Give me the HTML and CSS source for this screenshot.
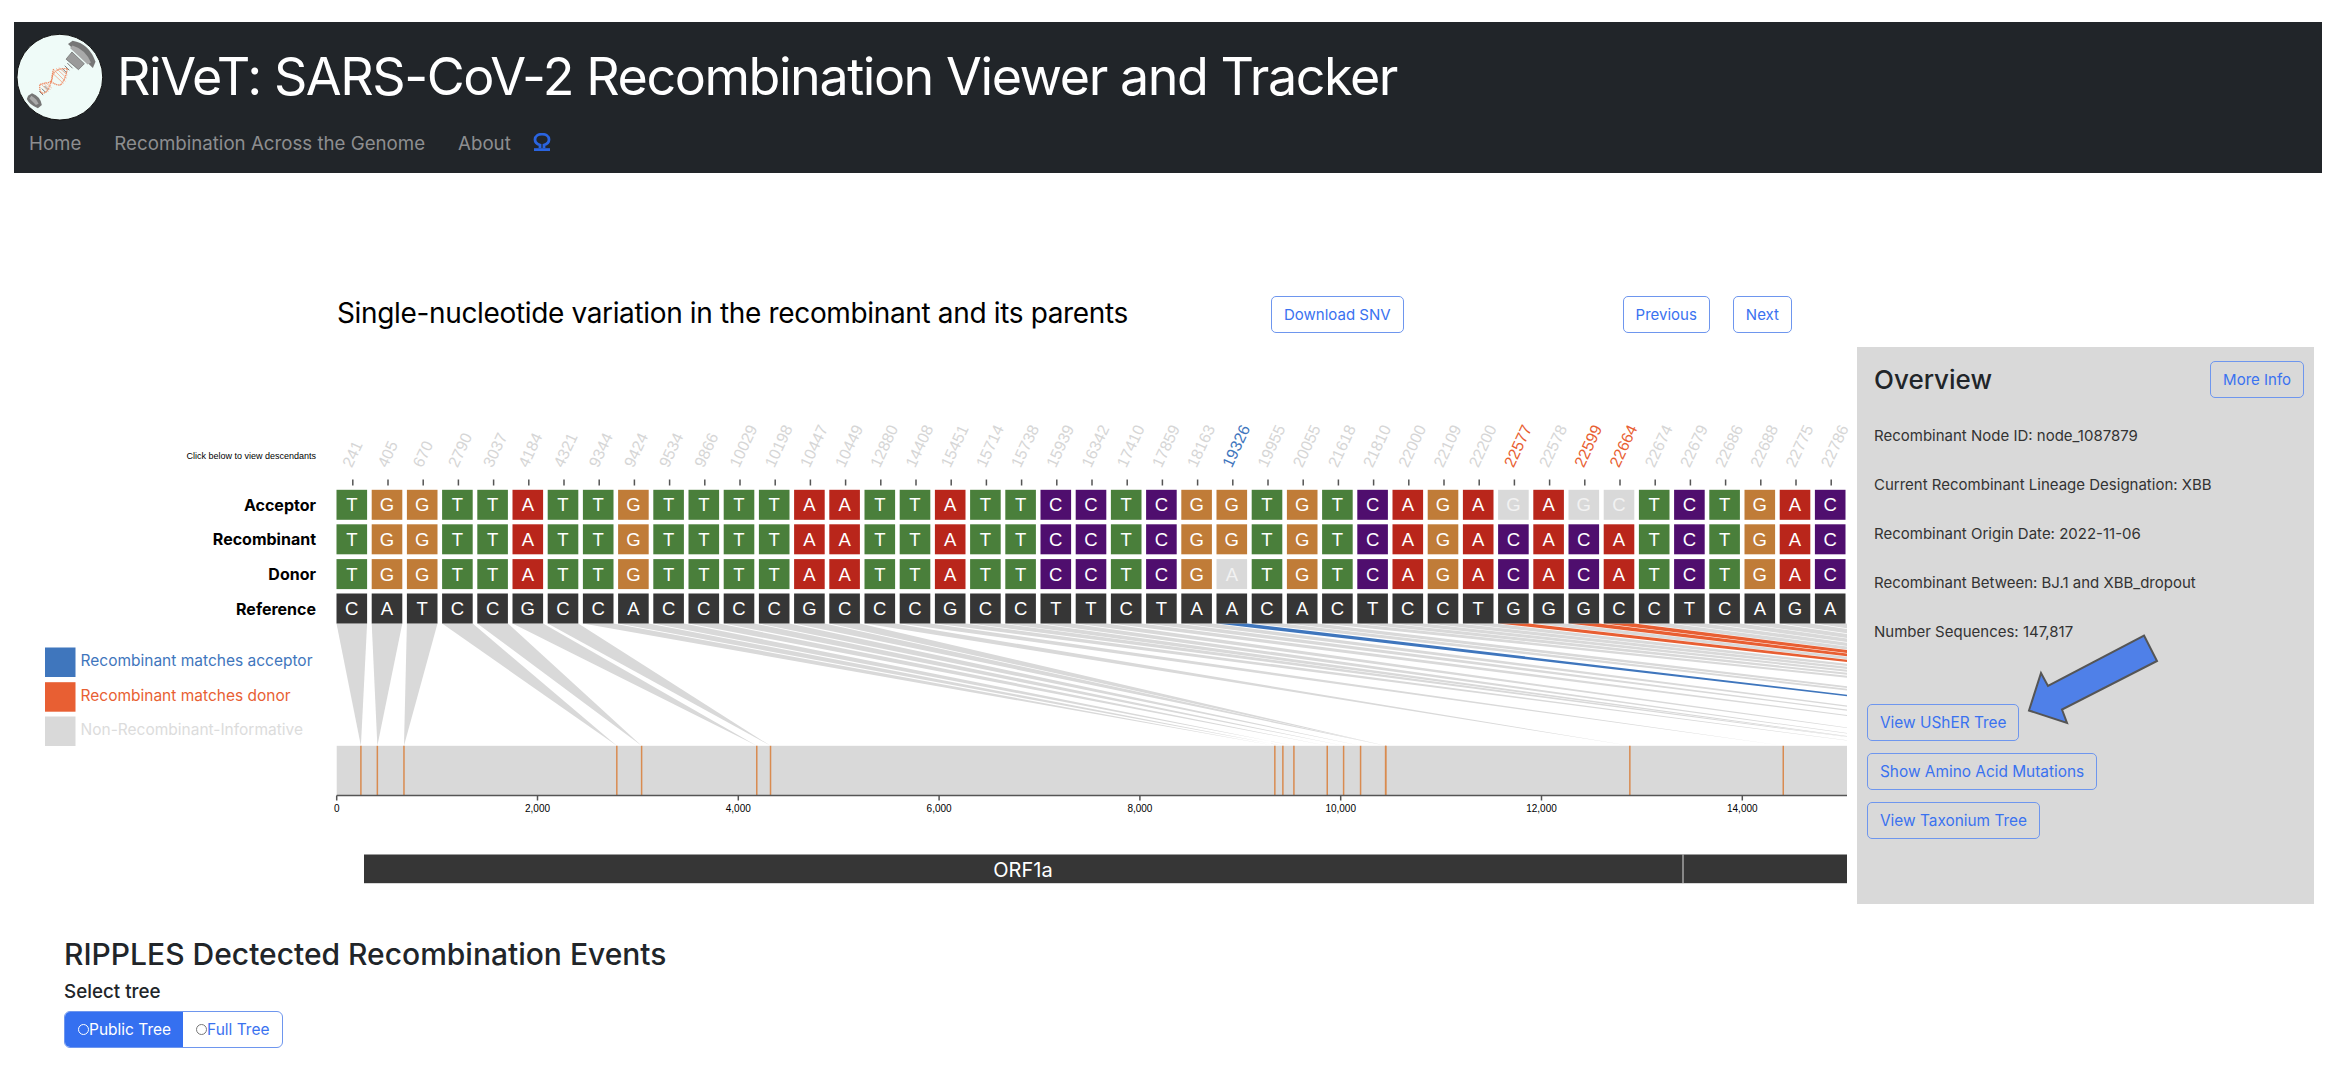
FILE: index.html
```html
<!DOCTYPE html>
<html lang="en">
<head>
<meta charset="utf-8">
<title>RiVeT: SARS-CoV-2 Recombination Viewer and Tracker</title>
<link rel="stylesheet" href="styles.css">
</head>
<body>
<header class="site-header">
  <div class="brand">
    <svg class="logo" viewBox="13 20 269 269" aria-label="RiVeT logo">
      <circle class="logo-disc" cx="147" cy="155" r="131"/>
      <path class="logo-cap" d="M172 54 L186 44 Q236 52 256 108 L248 127 Z"/>
      <path class="logo-cap-light" d="M186 58 Q225 70 242 110 L232 116 L178 66 Z"/>
      <path class="logo-stem" d="M184 78 L222 114 L204 132 L166 100 Z"/>
      <path class="logo-rungs" d="M170 112 L186 128 M162 120 L176 134 M154 128 L168 142 M100 182 L112 194 M92 190 L104 202 M84 198 L96 210"/>
      <path class="logo-helix" d="M170 130 C150 125 125 135 124 156 C122 178 100 170 86 178 M150 178 C165 160 166 145 170 130 M128 130 C122 150 124 160 120 170 C112 195 105 205 92 204 M120 168 C135 180 145 180 150 178 M86 178 C84 192 88 200 92 204"/>
      <path class="logo-rungs-o" d="M130 134 L164 168 M126 144 L158 174 M136 128 L168 158 M144 126 L170 148 M96 172 L118 194 M90 176 L112 200 M102 170 L122 188"/>
      <path class="logo-cap" d="M50 212 L62 204 Q88 214 92 240 L80 250 Q54 240 46 222 Z"/>
      <path class="logo-cap-light" d="M60 212 Q76 222 82 236 L74 240 L54 220 Z"/>
    </svg>
    <h1 class="site-title">RiVeT: SARS-CoV-2 Recombination Viewer and Tracker</h1>
  </div>
  <nav class="site-nav">
    <a class="nav-link">Home</a>
    <a class="nav-link">Recombination Across the Genome</a>
    <a class="nav-link">About</a>
    <svg class="gh-icon" viewBox="0 0 18 18" aria-label="GitHub">
      <path d="M7 15 V12 C3.2 11 2 8.8 2 6.5 C2 3 5.2 1.2 9 1.2 C12.8 1.2 16 3 16 6.5 C16 8.8 14.8 11 11 12 V15"/>
      <path d="M1 16.6 H17"/>
    </svg>
  </nav>
</header>

<main class="viz">
  <section class="viz-main">
    <div class="toolbar">
      <h2 class="viz-title">Single-nucleotide variation in the recombinant and its parents</h2>
      <button class="btn btn-download">Download SNV</button>
      <button class="btn btn-prev">Previous</button>
      <button class="btn btn-next">Next</button>
    </div>
    <svg id="chart" class="chart" viewBox="0 346.5 1857 557" width="1857" height="557"></svg>
  </section>

  <aside class="overview">
    <div class="overview-head">
      <h3 class="overview-title">Overview</h3>
      <button class="btn">More Info</button>
    </div>
    <div class="facts">
      <p class="fact">Recombinant Node ID: node_1087879</p>
      <p class="fact">Current Recombinant Lineage Designation: XBB</p>
      <p class="fact">Recombinant Origin Date: 2022-11-06</p>
      <p class="fact">Recombinant Between: BJ.1 and XBB_dropout</p>
      <p class="fact">Number Sequences: 147,817</p>
    </div>
    <div class="overview-actions">
      <button class="btn btn-action">View UShER Tree</button>
      <button class="btn btn-action">Show Amino Acid Mutations</button>
      <button class="btn btn-action">View Taxonium Tree</button>
    </div>
    <svg class="callout" viewBox="0 0 133 92" aria-hidden="true">
      <path d="M117 1.5 L130 27 L35 75.5 L40 89 L2 76.5 L14 39 L21 52 Z"/>
    </svg>
  </aside>
</main>

<section class="events">
  <h3 class="events-title">RIPPLES Dectected Recombination Events</h3>
  <div class="select-label">Select tree</div>
  <div class="tree-toggle">
    <label class="toggle-item is-active"><span class="radio"></span>Public Tree</label>
    <label class="toggle-item"><span class="radio"></span>Full Tree</label>
  </div>
</section>
<script src="chart.js"></script>
</body>
</html>
```
FILE: styles.css
```css
* { box-sizing: border-box; }
html, body { margin: 0; padding: 0; background: #fff; overflow: hidden; }
body { font-family: Inter, "Noto Sans", sans-serif; color: #212529; height: 1068px; }

.site-header {
  margin: 22px 14px 0 14px;
  height: 151px;
  background: #212529;
  padding: 11px 0 0 2px;
  display: flex;
  flex-direction: column;
}
.brand { display: flex; align-items: center; gap: 13px; height: 88px; }
.logo { width: 88px; height: 88px; flex: none; }
.logo-disc { fill: #effbf8; stroke: #111; stroke-width: 3; }
.logo-cap { fill: #767676; }
.logo-cap-light { fill: #a9a9a9; }
.logo-stem { fill: #9a9a9a; stroke: #666; stroke-width: 2; }
.logo-rungs { fill: none; stroke: #777; stroke-width: 3; }
.logo-helix { fill: none; stroke: #ee8a63; stroke-width: 4; stroke-dasharray: 4 2; }
.logo-rungs-o { fill: none; stroke: #f3a98c; stroke-width: 2.5; }
.site-title { margin: 0; font-size: 52px; letter-spacing: -1.44px; font-weight: 400; color: #fff; line-height: 1.2; white-space: nowrap; }
.site-nav { display: flex; align-items: center; gap: 33px; margin-top: 11px; padding-left: 13px; }
.nav-link { font-size: 18.7px; color: #8d8e90; line-height: 24px; }
.gh-icon { width: 18px; height: 18px; margin-left: -11px; margin-top: -4px; fill: none; stroke: #2a64e0; stroke-width: 2.8; }

.viz { display: flex; margin-top: 123px; }
.viz-main { width: 1857px; flex: none; }
.toolbar { display: flex; align-items: center; height: 37px; margin-bottom: 13.5px; padding-left: 337px; }
.viz-title { margin: 0 0 3px; width: 934px; flex: none; font-size: 28px; letter-spacing: -0.35px; font-weight: 400; color: #000; white-space: nowrap; }
.btn {
  font-family: inherit;
  font-size: 15px;
  color: #3a72f0;
  background: transparent;
  border: 1.5px solid #6e96ee;
  border-radius: 5px;
  height: 37px;
  padding: 0 12px;
  white-space: nowrap;
}
.btn-action { font-size: 15.4px; }
.btn-prev { margin-left: 219px; }
.btn-next { margin-left: 23px; }
.chart { display: block; }

.overview { position: relative; width: 457px; height: 557px; margin-top: 50.5px; background: #d9d9d9; }
.overview-head { display: flex; justify-content: space-between; align-items: center; padding: 14.5px 10px 0 17px; }
.overview-title { margin: 0; font-size: 26px; font-weight: 500; color: #212529; }
.facts { padding: 12.5px 0 0 17px; }
.fact { margin: 0; height: 49px; line-height: 49px; font-size: 15px; color: #333; white-space: nowrap; }
.overview-actions { display: flex; flex-direction: column; align-items: flex-start; gap: 12px; margin-top: 48.5px; padding-left: 10px; }
.callout { position: absolute; left: 170px; top: 287px; width: 133px; height: 92px; }
.callout path { fill: #4f80e8; stroke: #555; stroke-width: 2; }

.events { padding: 33px 0 0 64px; }
.events-title { margin: 0; font-size: 30px; font-weight: 500; line-height: 34px; color: #212529; }
.select-label { margin-top: 9px; font-size: 18.8px; font-weight: 500; line-height: 24px; }
.tree-toggle { display: inline-flex; margin-top: 7px; height: 37px; border: 1px solid #6e96ee; border-radius: 6px; overflow: hidden; }
.toggle-item { display: flex; align-items: center; padding: 0 12px 0 13px; font-size: 15.5px; color: #3a72f0; }
.toggle-item.is-active { background: #3570f0; color: #fff; }
.radio { width: 11px; height: 11px; border: 1px solid #777; border-radius: 50%; background: #fff; }
.is-active .radio { background: transparent; border-color: #fff; }

/* chart */
.nt { stroke: none; }
.nt-T { fill: #4a7f3b; }
.nt-G { fill: #c07c38; }
.nt-A { fill: #b9261b; }
.nt-C { fill: #4f0e6e; }
.nt-ref { fill: #363636; }
.nt-off { fill: #d9d9d9; }
.nt-label { font: 18.5px "Liberation Sans", sans-serif; fill: #fff; text-anchor: middle; }
.nt-label-off { fill: #f2f2f2; }
.pos-label { font: 16px "Liberation Sans", sans-serif; fill: #d6d6d6; }
.pos-label-acc { fill: #3f76bd; }
.pos-label-don { fill: #e85f33; }
.pos-tick { stroke: #555; stroke-width: 1.5; }
.row-label { font: 700 16px Inter, sans-serif; fill: #000; text-anchor: end; }
.hint { font: 9px "Liberation Sans", sans-serif; fill: #000; text-anchor: end; }
.link { fill: #d9d9d9; }
.link-acc { fill: #3f76bd; }
.link-don { fill: #e85f33; }
.genome-bar { fill: #d9d9d9; }
.genome-mark { stroke: #d98b50; stroke-width: 1.5; }
.axis-line { stroke: #555; stroke-width: 1.5; }
.axis-label { font: 10px "Liberation Sans", sans-serif; fill: #000; text-anchor: middle; }
.gene { fill: #363636; }
.gene-div { stroke: #d9d9d9; stroke-width: 1; }
.gene-label { font: 20px Inter, sans-serif; fill: #fff; text-anchor: middle; }
.legend-swatch-acc { fill: #3f76bd; }
.legend-swatch-don { fill: #e85f33; }
.legend-swatch-off { fill: #d9d9d9; }
.legend-text { font: 15.5px Inter, sans-serif; }
.legend-text-acc { fill: #3f76bd; }
.legend-text-don { fill: #e85f33; }
.legend-text-off { fill: #dcdcdc; }
```
FILE: chart.js
```js
(function () {
  var NS = 'http://www.w3.org/2000/svg';
  var svg = document.getElementById('chart');
  function el(tag, cls, attrs, text, parent) {
    var n = document.createElementNS(NS, tag);
    if (cls) n.setAttribute('class', cls);
    for (var k in attrs) n.setAttribute(k, attrs[k]);
    if (text != null) n.textContent = text;
    (parent || svg).appendChild(n);
    return n;
  }
  var positions = [241,405,670,2790,3037,4184,4321,9344,9424,9534,9866,10029,10198,10447,10449,12880,14408,15451,15714,15738,15939,16342,17410,17859,18163,19326,19955,20055,21618,21810,22000,22109,22200,22577,22578,22599,22664,22674,22679,22686,22688,22775,22786];
  var acceptor    = 'TGGTTATTGTTTTAATTATTCCTCGGTGTCAGAGAGCTCTGAC';
  var recombinant = 'TGGTTATTGTTTTAATTATTCCTCGGTGTCAGACACATCTGAC';
  var donor       = 'TGGTTATTGTTTTAATTATTCCTCGATGTCAGACACATCTGAC';
  var reference   = 'CATCCGCCACCCCGCCCGCCTTCTAACACTCCTGGGCCTCAGA';
  var offCells = { 0: [33, 35, 36], 2: [25] };
  var acc = [25], don = [33, 35, 36];
  var X0 = 336.5, PITCH = 35.2, W = 30.6, H = 30;
  var rows = [
    { name: 'Acceptor', seq: acceptor, y: 489.3 },
    { name: 'Recombinant', seq: recombinant, y: 523.8 },
    { name: 'Donor', seq: donor, y: 558.6 },
    { name: 'Reference', seq: reference, y: 593, ref: true }
  ];
  var SCALE = 0.1004, G0 = 336.7, RIGHT = 1847, TOP = 623, BAR = 745.3, BAR_B = 795;
  function gx(v) { return G0 + v * SCALE; }

  var defs = el('defs', '', {});
  var clip = el('clipPath', '', { id: 'plot-clip' }, null, defs);
  el('rect', '', { x: 0, y: 346, width: RIGHT, height: 560 }, null, clip);

  // legend
  [['acc', 'Recombinant matches acceptor', 647], ['don', 'Recombinant matches donor', 681.7], ['off', 'Non-Recombinant-Informative', 716]].forEach(function (l) {
    el('rect', 'legend-swatch-' + l[0], { x: 45, y: l[2], width: 30.5, height: 29.5 });
    el('text', 'legend-text legend-text-' + l[0], { x: 80.5, y: l[2] + 18.5 }, l[1]);
  });

  // links
  var links = el('g', '', { 'clip-path': 'url(#plot-clip)' });
  function link(i, cls) {
    var x = X0 + PITCH * i, p = gx(positions[i]);
    el('polygon', cls, { points: x + ',' + TOP + ' ' + (x + W) + ',' + TOP + ' ' + p + ',' + BAR }, null, links);
  }
  positions.forEach(function (_, i) {
    if (acc.indexOf(i) < 0 && don.indexOf(i) < 0) link(i, 'link');
  });
  acc.forEach(function (i) { link(i, 'link-acc'); });
  don.forEach(function (i) { link(i, 'link-don'); });

  // header labels and ticks
  el('text', 'hint', { x: 316, y: 458 }, 'Click below to view descendants');
  positions.forEach(function (p, i) {
    var cx = X0 + PITCH * i + W / 2;
    var cls = 'pos-label' + (acc.indexOf(i) >= 0 ? ' pos-label-acc' : don.indexOf(i) >= 0 ? ' pos-label-don' : '');
    el('text', cls, { x: 0, y: 0, transform: 'translate(' + cx + ' 468) rotate(-65)' }, p);
    el('line', 'pos-tick', { x1: cx + 1, x2: cx + 1, y1: 479, y2: 485 });
  });

  // nucleotide matrix
  rows.forEach(function (r, ri) {
    el('text', 'row-label', { x: 316, y: r.y + 21 }, r.name);
    r.seq.split('').forEach(function (c, i) {
      var x = X0 + PITCH * i;
      var off = (offCells[ri] || []).indexOf(i) >= 0;
      el('rect', 'nt ' + (r.ref ? 'nt-ref' : off ? 'nt-off' : 'nt-' + c), { x: x, y: r.y, width: W, height: H });
      el('text', 'nt-label' + (off ? ' nt-label-off' : ''), { x: x + W / 2, y: r.y + H / 2 + 6.5 }, c);
    });
  });

  // genome bar
  el('rect', 'genome-bar', { x: G0, y: BAR, width: RIGHT - G0, height: BAR_B - BAR });
  positions.forEach(function (p) {
    if (gx(p) < RIGHT) el('line', 'genome-mark', { x1: gx(p), x2: gx(p), y1: BAR, y2: BAR_B });
  });
  el('line', 'axis-line', { x1: G0, x2: RIGHT, y1: BAR_B, y2: BAR_B });
  for (var v = 0; v <= 14000; v += 2000) {
    el('line', 'axis-line', { x1: gx(v), x2: gx(v), y1: BAR_B, y2: BAR_B + 5 });
    el('text', 'axis-label', { x: gx(v), y: 811 }, v.toLocaleString('en-US'));
  }

  // gene track
  el('rect', 'gene', { x: 364, y: 854, width: RIGHT - 364, height: 28.7 });
  el('line', 'gene-div', { x1: 1683, x2: 1683, y1: 854, y2: 882.7 });
  el('text', 'gene-label', { x: 1023, y: 876 }, 'ORF1a');
})();
```
